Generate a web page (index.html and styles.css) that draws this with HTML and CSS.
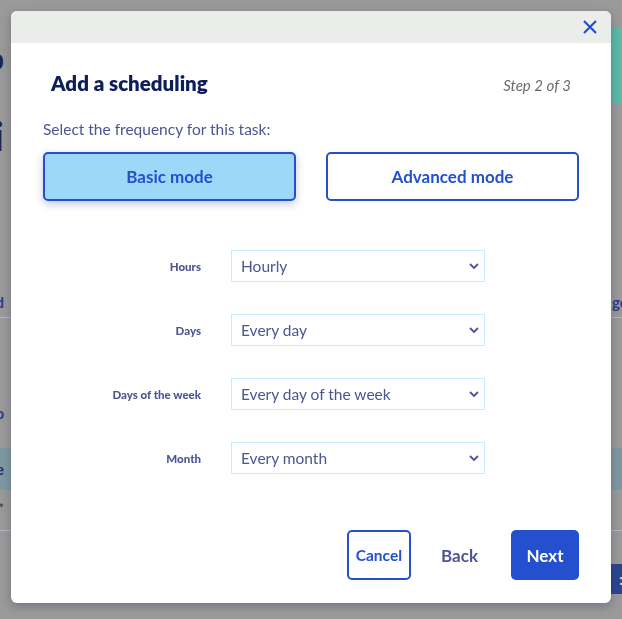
FILE: index.html
```html
<!DOCTYPE html>
<html lang="en">
<head>
    <meta charset="UTF-8">
    <meta name="viewport" content="width=device-width, initial-scale=1.0">
    <title>Add a scheduling</title>
    <link rel="stylesheet" href="styles.css">
</head>
<body>

<div class="page">
    <div class="page-edge page-edge-left">
        <div class="edge-title">Crons p</div>
        <div class="edge-title edge-title-2">Tasks i</div>
        <div class="edge-tab">Ord</div>
        <div class="edge-sub">Info</div>
        <div class="edge-band">Name</div>
        <div class="edge-cell">*</div>
    </div>
    <div class="page-edge page-edge-right">
        <div class="edge-action"></div>
        <div class="edge-tab">ge</div>
        <div class="edge-band"></div>
        <div class="edge-cell"></div>
        <div class="edge-btn">:</div>
    </div>
</div>

<div class="overlay">
    <div class="modal" role="dialog">
        <div class="modal-top">
            <button type="button" class="modal-close" aria-label="Close">
                <svg width="14" height="14" viewBox="0 0 14 14"><path d="M1 1 L13 13 M13 1 L1 13" stroke="currentColor" stroke-width="2.2" fill="none"/></svg>
            </button>
        </div>

        <div class="modal-body">
            <div class="modal-head">
                <h2>Add a scheduling</h2>
                <span class="modal-step">Step 2 of 3</span>
            </div>

            <p class="modal-hint">Select the frequency for this task:</p>

            <div class="mode-switch">
                <button type="button" class="mode-btn is-active">Basic mode</button>
                <button type="button" class="mode-btn">Advanced mode</button>
            </div>

            <form class="freq-form">
                <label for="hours">Hours</label>
                <div class="select-wrap">
                    <select id="hours"><option>Hourly</option></select>
                    <svg class="chevron" width="10" height="6" viewBox="0 0 10 6"><path d="M1 1 L5 5 L9 1" stroke="currentColor" stroke-width="1.8" fill="none"/></svg>
                </div>

                <label for="days">Days</label>
                <div class="select-wrap">
                    <select id="days"><option>Every day</option></select>
                    <svg class="chevron" width="10" height="6" viewBox="0 0 10 6"><path d="M1 1 L5 5 L9 1" stroke="currentColor" stroke-width="1.8" fill="none"/></svg>
                </div>

                <label for="weekdays">Days of the week</label>
                <div class="select-wrap">
                    <select id="weekdays"><option>Every day of the week</option></select>
                    <svg class="chevron" width="10" height="6" viewBox="0 0 10 6"><path d="M1 1 L5 5 L9 1" stroke="currentColor" stroke-width="1.8" fill="none"/></svg>
                </div>

                <label for="month">Month</label>
                <div class="select-wrap">
                    <select id="month"><option>Every month</option></select>
                    <svg class="chevron" width="10" height="6" viewBox="0 0 10 6"><path d="M1 1 L5 5 L9 1" stroke="currentColor" stroke-width="1.8" fill="none"/></svg>
                </div>
            </form>

            <div class="modal-actions">
                <button type="button" class="btn btn-outline">Cancel</button>
                <button type="button" class="btn btn-link">Back</button>
                <button type="button" class="btn btn-primary">Next</button>
            </div>
        </div>
    </div>
</div>

</body>
</html>
```

FILE: styles.css
```css
body {
    font-family: 'Lato', 'Open Sans', sans-serif;
    margin: 0;
    padding: 0;
    background: #9a9a9a;
    color: #4d5592;
    overflow: hidden;
}

/* page behind the dialog, already dimmed */
.page {
    display: flex;
    justify-content: space-between;
    height: 619px;
}
.page-edge {
    width: 11px;
    overflow: hidden;
    display: flex;
    flex-direction: column;
}
.page-edge-left {
    align-items: flex-end;
    padding-right: 7px;
    width: 4px;
}
.page-edge-left > div {
    white-space: nowrap;
}
.edge-title {
    margin-top: 40px;
    font-size: 30px;
    font-weight: 700;
    color: #1d2653;
    line-height: 36px;
}
.edge-title-2 {
    margin-top: 38px;
    font-size: 40px;
    line-height: 44px;
}
.page-edge-left .edge-tab {
    margin-top: 126px;
}
.edge-tab {
    font-size: 15px;
    font-weight: 700;
    color: #2a3c8c;
    line-height: 30px;
    padding-top: 3px;
    border-bottom: 1px solid #b3b8c0;
    width: 100%;
}
.page-edge-left .edge-tab,
.page-edge-left .edge-band,
.page-edge-left .edge-cell {
    width: auto;
    margin-right: -7px;
    padding-right: 7px;
}
.edge-sub {
    margin-top: 85px;
    font-size: 15px;
    font-weight: 700;
    color: #2a3c8c;
    line-height: 20px;
}
.edge-band {
    margin-top: 25px;
    height: 42px;
    line-height: 42px;
    background: #7f98a0;
    font-size: 15px;
    font-weight: 700;
    color: #283064;
    width: 100%;
}
.edge-cell {
    height: 40px;
    line-height: 36px;
    font-size: 13px;
    color: #333;
    border-bottom: 1px solid #b3b8c0;
    width: 100%;
}
.page-edge-right {
    align-items: flex-start;
}
.edge-action {
    margin-top: 28px;
    width: 11px;
    height: 75px;
    background: #5bbba5;
}
.page-edge-right .edge-tab {
    margin-top: 181px;
    padding-left: 1px;
}
.page-edge-right .edge-band {
    margin-top: 130px;
}
.edge-btn {
    margin-top: 33px;
    width: 11px;
    height: 30px;
    background: #2a4590;
    color: #ccd;
    font-weight: 700;
    line-height: 30px;
    padding-left: 8px;
    box-sizing: border-box;
}

/* dialog */
.overlay {
    position: fixed;
    top: 0;
    left: 0;
    right: 0;
    bottom: 0;
    padding: 11px;
}
.modal {
    width: 600px;
    background: white;
    border-radius: 6px;
    box-shadow: 0 3px 10px rgba(40, 40, 80, 0.35);
    overflow: hidden;
}
.modal-top {
    height: 32px;
    background: #ebedeb;
    display: flex;
    justify-content: flex-end;
    align-items: center;
    padding-right: 14px;
}
.modal-close {
    border: none;
    background: none;
    padding: 0;
    color: #2450d0;
    display: flex;
    cursor: pointer;
}
.modal-body {
    padding: 28px 32px 23px;
}
.modal-head {
    display: flex;
    justify-content: space-between;
    align-items: baseline;
    padding: 0 8px;
}
.modal-head h2 {
    margin: 0;
    font-size: 20.5px;
    line-height: 24px;
    font-weight: 800;
    color: #0d1e5a;
}
.modal-step {
    font-size: 15px;
    font-style: italic;
    color: #6b6b6b;
}
.modal-hint {
    margin: 24px 0 13px;
    font-size: 15.5px;
    line-height: 20px;
}
.mode-switch {
    display: flex;
    gap: 30px;
}
.mode-btn {
    flex: 1;
    height: 49px;
    border: 2px solid #2450d0;
    border-radius: 5px;
    background: white;
    color: #2450d0;
    font-family: inherit;
    font-size: 17px;
    font-weight: 700;
    cursor: pointer;
}
.mode-btn.is-active {
    background: #9dd8f9;
    box-shadow: 0 3px 8px rgba(60, 70, 160, 0.3);
}
.freq-form {
    display: grid;
    grid-template-columns: 158px 254px;
    column-gap: 30px;
    row-gap: 32px;
    align-items: center;
    margin-top: 49px;
}
.freq-form label {
    text-align: right;
    font-size: 11.5px;
    font-weight: 900;
}
.select-wrap {
    position: relative;
}
.select-wrap select {
    appearance: none;
    -webkit-appearance: none;
    width: 100%;
    height: 32px;
    border: 1px solid #c8ecfc;
    border-radius: 0;
    background: white;
    padding: 0 9px;
    font-family: inherit;
    font-size: 15.5px;
    color: #4d5592;
}
.chevron {
    position: absolute;
    right: 6px;
    top: 13px;
    color: #4d5592;
    pointer-events: none;
}
.modal-actions {
    display: flex;
    justify-content: flex-end;
    gap: 16px;
    margin-top: 56px;
}
.btn {
    height: 50px;
    border-radius: 5px;
    font-family: inherit;
    font-size: 17px;
    font-weight: 700;
    cursor: pointer;
}
.btn-outline {
    border: 2px solid #2450d0;
    background: white;
    color: #2450d0;
    padding: 0 7px;
    font-size: 15.5px;
    margin-right: 1px;
}
.btn-link {
    border: none;
    background: none;
    color: #4d5592;
    padding: 0 17px 0 13px;
}
.btn-primary {
    border: none;
    background: #2450d0;
    color: white;
    padding: 0 14px;
    width: 68px;
}
```
